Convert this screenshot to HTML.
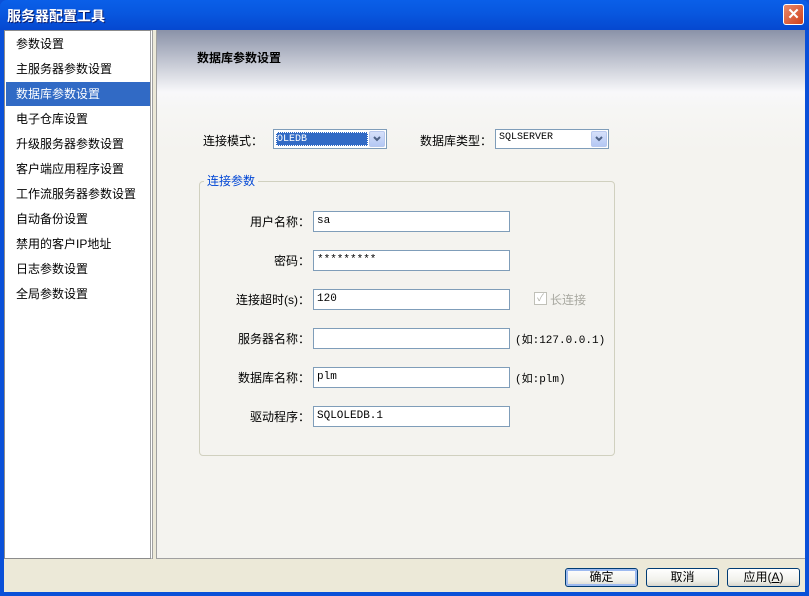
<!DOCTYPE html>
<html><head><meta charset="utf-8"><style>
*{margin:0;padding:0;box-sizing:border-box}
body{width:809px;height:596px;overflow:hidden;background:#0a50d8;font-family:"Liberation Sans","Noto Sans CJK SC","WenQuanYi Zen Hei",sans-serif;font-size:12px;color:#000;position:relative}
.a{position:absolute}
.title{left:0;top:0;width:809px;height:30px;background:linear-gradient(#0a5fe8,#0858e0 40%,#0548d0);border-radius:7px 7px 0 0}
.title span{position:absolute;left:7px;top:6px;color:#fff;font-weight:bold;font-size:14px;text-shadow:1px 1px #0a1e70}
.close{left:783px;top:4px;width:21px;height:21px;background:linear-gradient(135deg,#e88a6a,#d0401c);border:1px solid #fff;border-radius:3px;color:#fff;font-weight:bold;font-size:15px;text-align:center;line-height:19px}
.frame{left:4px;top:30px;width:801px;height:562px;background:#ece9d8}
.list{left:4px;top:30px;width:149px;height:529px;background:#fff;border:1px solid #8c8c8c;border-right:3px double #a0a0a0}
.item{position:absolute;left:11px;font-size:12px}
.sel{left:6px;top:82px;width:144px;height:24px;background:#316ac5}
.right{left:156px;top:30px;width:649px;height:529px;border-left:1px solid #a0a0a0;border-bottom:1px solid #a0a0a0;background:linear-gradient(#8a92a8 0px,#c0c4d0 30px,#f8f8fa 62px,#f6f6f4 80px,#f4f3ef 120px)}
.lbl{position:absolute;text-align:right;width:120px;left:190px}
.inp{position:absolute;left:313px;width:197px;height:21px;background:#fff;border:1px solid #7f9db9;font-family:"Liberation Mono",monospace;font-size:11px;padding:3px 3px}
.combo{position:absolute;height:20px;background:#fff;border:1px solid #7f9db9}
.combo .arr{position:absolute;right:1px;top:1px;width:16px;height:16px;background:linear-gradient(#d6e0fa,#b4c8f4);border:1px solid #b8c8ee;border-radius:2px}
.group{left:199px;top:181px;width:416px;height:275px;border:1px solid #d0d0bf;border-radius:4px}
.btn{position:absolute;top:568px;width:73px;height:19px;border:1px solid #003c74;border-radius:3px;background:linear-gradient(#fff,#f0f0ea 70%,#d8d6cc);text-align:center;line-height:17px;font-size:12px}
</style></head><body>
<div class="a title"><span>服务器配置工具</span></div>
<div class="a close">✕</div>
<div class="a frame"></div>
<div class="a list"></div>
<div class="a sel"></div>
<div class="item" style="top:35px;left:16px">参数设置</div>
<div class="item" style="top:60px;left:16px">主服务器参数设置</div>
<div class="item" style="top:85px;left:16px;color:#fff">数据库参数设置</div>
<div class="item" style="top:110px;left:16px">电子仓库设置</div>
<div class="item" style="top:135px;left:16px">升级服务器参数设置</div>
<div class="item" style="top:160px;left:16px">客户端应用程序设置</div>
<div class="item" style="top:185px;left:16px">工作流服务器参数设置</div>
<div class="item" style="top:210px;left:16px">自动备份设置</div>
<div class="item" style="top:235px;left:16px">禁用的客户IP地址</div>
<div class="item" style="top:260px;left:16px">日志参数设置</div>
<div class="item" style="top:285px;left:16px">全局参数设置</div>
<div class="a right"></div>
<div class="a" style="left:197px;top:49px;font-weight:bold">数据库参数设置</div>
<div class="a" style="left:203px;top:132px">连接模式：</div>
<div class="combo" style="left:273px;top:129px;width:114px"><div class="a" style="left:2px;top:2px;width:92px;height:14px;background:#316ac5;color:#fff;font-family:'Liberation Mono',monospace;font-size:10px;line-height:13px;border:1px dotted #fff">OLEDB</div><div class="arr"><svg width="14" height="14"><path d="M4 5l3 3 3-3" stroke="#4d6185" stroke-width="2" fill="none"/></svg></div></div>
<div class="a" style="left:420px;top:132px">数据库类型：</div>
<div class="combo" style="left:495px;top:129px;width:114px"><div class="a" style="left:3px;top:2px;font-family:'Liberation Mono',monospace;font-size:10px">SQLSERVER</div><div class="arr"><svg width="14" height="14"><path d="M4 5l3 3 3-3" stroke="#4d6185" stroke-width="2" fill="none"/></svg></div></div>
<div class="a group"></div>
<div class="a" style="left:204px;top:172px;padding:0 3px;color:#0046d5;background:#f4f3ef">连接参数</div>
<div class="lbl" style="top:213px">用户名称：</div><div class="inp" style="top:211px">sa</div>
<div class="lbl" style="top:252px">密码：</div><div class="inp" style="top:250px">*********</div>
<div class="lbl" style="top:291px">连接超时(s)：</div><div class="inp" style="top:289px">120</div>
<div class="a" style="left:534px;top:292px;width:13px;height:13px;border:1px solid #c0c0b8;background:#fff;color:#b0b0a8;font-size:10px;line-height:11px;text-align:center">✓</div>
<div class="a" style="left:550px;top:291px;color:#a8a8a0">长连接</div>
<div class="lbl" style="top:330px">服务器名称：</div><div class="inp" style="top:328px"></div>
<div class="a" style="left:515px;top:331px;font-family:'Liberation Mono',monospace;font-size:11px">(如:127.0.0.1)</div>
<div class="lbl" style="top:369px">数据库名称：</div><div class="inp" style="top:367px">plm</div>
<div class="a" style="left:515px;top:370px;font-family:'Liberation Mono',monospace;font-size:11px">(如:plm)</div>
<div class="lbl" style="top:408px">驱动程序：</div><div class="inp" style="top:406px">SQLOLEDB.1</div>
<div class="btn" style="left:565px;box-shadow:inset 0 0 0 2px #9dbaf0">确定</div>
<div class="btn" style="left:646px">取消</div>
<div class="btn" style="left:727px">应用(<u>A</u>)</div>
</body></html>
